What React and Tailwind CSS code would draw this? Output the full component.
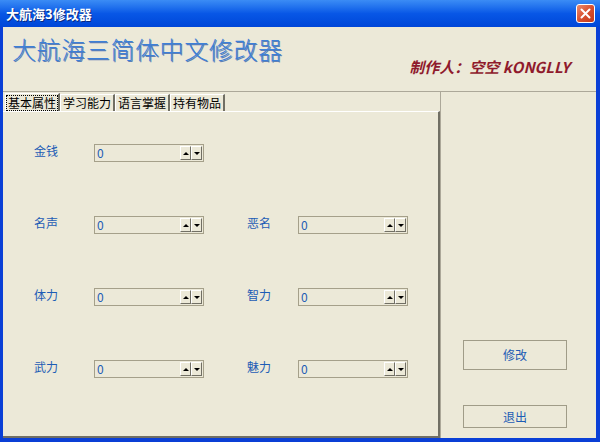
const font = { fontFamily: '"Noto Sans CJK SC", "Liberation Sans", sans-serif' };

function Spin() {
  return (
    <div className="flex h-[14px] items-stretch">
      <div className="flex w-[11px] items-center justify-center border-t border-l border-white border-r border-b border-r-[#716f64] border-b-[#716f64] bg-[#ece9d8]">
        <div className="h-0 w-0 border-x-[3px] border-b-[3px] border-x-transparent border-b-black" />
      </div>
      <div className="flex w-[11px] items-center justify-center border-t border-l border-white border-r border-b border-r-[#716f64] border-b-[#716f64] bg-[#ece9d8]">
        <div className="h-0 w-0 border-x-[3px] border-t-[3px] border-x-transparent border-t-black" />
      </div>
    </div>
  );
}

function NumField() {
  return (
    <div className="flex h-[18px] w-[110px] items-center justify-between border border-[#a5a08a] pl-[2px] pr-[1px]">
      <span className="text-[12px] leading-none text-[#1d5cb5]" style={font}>0</span>
      <Spin />
    </div>
  );
}

function Field({ label, labelW }) {
  return (
    <div className="flex items-center">
      <span className={`${labelW} -mt-[5px] text-[12px] text-[#1d5cb5]`} style={font}>{label}</span>
      <NumField />
    </div>
  );
}

const tabs = ['基本属性', '学习能力', '语言掌握', '持有物品'];

export default function App() {
  return (
    <div className="flex h-[442px] w-[600px] flex-col overflow-hidden bg-[#0a3fd6]" style={font}>
      {/* Title bar */}
      <div className="flex h-[27px] items-center justify-between bg-gradient-to-b from-[#3b8cf5] via-[#0857e6] to-[#0046d8] pl-[6px] pr-[5px]">
        <span className="text-[13px] font-bold text-white [text-shadow:1px_1px_0_#0a2a80]">大航海3修改器</span>
        <div className="flex h-[19px] w-[19px] items-center justify-center rounded-[3px] border border-white bg-gradient-to-br from-[#e98a6e] via-[#d9502f] to-[#c2391b]">
          <svg width="11" height="11" viewBox="0 0 11 11">
            <path d="M1.5 1.5 L9.5 9.5 M9.5 1.5 L1.5 9.5" stroke="white" strokeWidth="2" strokeLinecap="round" />
          </svg>
        </div>
      </div>

      {/* Client */}
      <div className="mx-[3px] mb-[4px] mr-[4px] flex flex-1 flex-col bg-[#ece9d8]">
        <div className="flex h-[65px] items-start justify-between border-b border-[#aca899] pl-[9px] pr-[26px]">
          <span className="mt-[7px] text-[24px] font-light leading-[30px] tracking-[0.6px] text-[#3d80d8] [text-shadow:1px_1px_0_#5f7fb5]">大航海三简体中文修改器</span>
          <span className="mt-[29px] text-[15px] font-bold italic text-[#8f1a2c]">制作人：空空 kONGLLY</span>
        </div>

        <div className="flex flex-1">
          {/* Tab control */}
          <div className="flex w-[438px] flex-col pt-[1px]">
            <div className="flex h-[18px] items-end pl-[2px]">
              {tabs.map((t, i) => (
                <div
                  key={t}
                  className={`flex items-center border-l border-t border-white border-r-2 border-r-[#716f64] px-[1px] text-[12px] leading-none text-black ${i === 0 ? 'h-[18px]' : 'h-[17px]'}`}
                >
                  <span className={`px-[1px] py-[1px] ${i === 0 ? 'outline outline-1 outline-dotted outline-black' : ''}`}>{t}</span>
                </div>
              ))}
            </div>
            <div className="flex flex-1 flex-col gap-[54px] border-t border-white border-r-2 border-b-2 border-r-[#716f64] border-b-[#716f64] pl-[31px] pt-[32px]">
              <div className="flex">
                <Field label="金钱" labelW="w-[60px]" />
              </div>
              <div className="flex gap-[43px]">
                <Field label="名声" labelW="w-[60px]" />
                <Field label="恶名" labelW="w-[51px]" />
              </div>
              <div className="flex gap-[43px]">
                <Field label="体力" labelW="w-[60px]" />
                <Field label="智力" labelW="w-[51px]" />
              </div>
              <div className="flex gap-[43px]">
                <Field label="武力" labelW="w-[60px]" />
                <Field label="魅力" labelW="w-[51px]" />
              </div>
            </div>
          </div>

          {/* Right panel */}
          <div className="flex flex-1 flex-col items-center border-l border-[#aca899] pl-[22px] pr-[29px]">
            <button className="mt-[248px] h-[30px] w-[104px] border border-[#a09c88] text-[12px] text-[#1d5cb5]">修改</button>
            <button className="mt-[35px] h-[23px] w-[104px] border border-[#a09c88] text-[12px] text-[#1d5cb5]">退出</button>
          </div>
        </div>
      </div>
    </div>
  );
}
